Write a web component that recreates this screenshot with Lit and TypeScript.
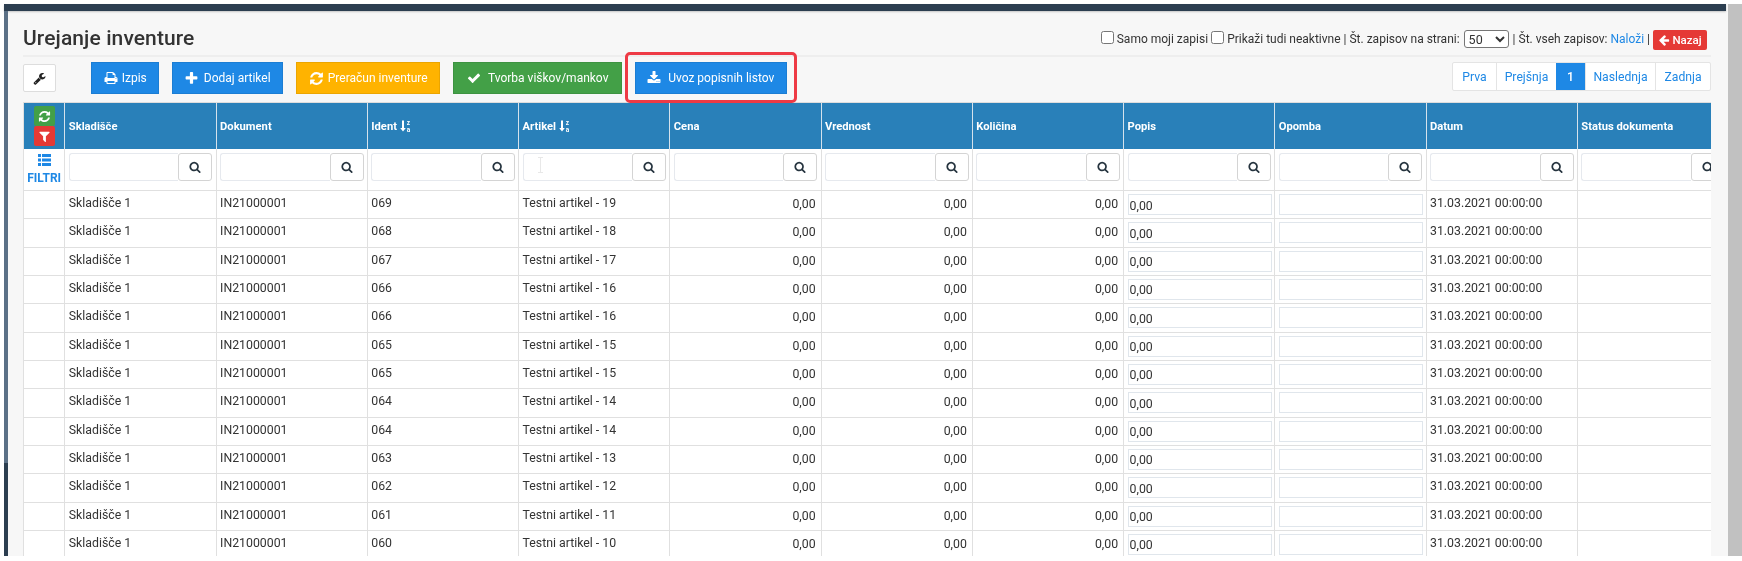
import { LitElement, html, css, svg } from 'lit';
import { customElement } from 'lit/decorators.js';

const P = {
  search: 'M1216 832q0-185-131.500-316.500t-316.500-131.500-316.500 131.500-131.500 316.500 131.500 316.500 316.500 131.500 316.500-131.500 131.500-316.500zm512 832q0 52-38 90t-90 38q-54 0-90-38l-343-342q-179 124-399 124-143 0-273.500-55.500t-225-150-150-225-55.500-273.500 55.500-273.500 150-225 225-150 273.500-55.500 273.500 55.500 225 150 150 225 55.500 273.500q0 220-124 399l343 343q37 37 37 90z',
  plus: 'M1600 736v192q0 40-28 68t-68 28h-416v416q0 40-28 68t-68 28h-192q-40 0-68-28t-28-68v-416h-416q-40 0-68-28t-28-68v-192q0-40 28-68t68-28h416v-416q0-40 28-68t68-28h192q40 0 68 28t28 68v416h416q40 0 68 28t28 68z',
  check: 'M1671 566q0 40-28 68l-724 724-136 136q-28 28-68 28t-68-28l-136-136-362-362q-28-28-28-68t28-68l136-136q28-28 68-28t68 28l294 295 656-657q28-28 68-28t68 28l136 136q28 28 28 68z',
  refresh: 'M1639 1056q0 5-1 7-64 268-268 434.500t-478 166.500q-146 0-282.500-55t-243.500-157l-129 129q-19 19-45 19t-45-19-19-45v-448q0-26 19-45t45-19h448q26 0 45 19t19 45-19 45l-137 137q71 66 161 102t187 36q134 0 250-65t186-179q11-17 53-117 8-23 30-23h192q13 0 22.500 9.500t9.500 22.500zm25-800v448q0 26-19 45t-45 19h-448q-26 0-45-19t-19-45 19-45l138-138q-148-137-349-137-134 0-250 65t-186 179q-11 17-53 117-8 23-30 23h-199q-13 0-22.500-9.500t-9.500-22.500v-7q65-268 270-434.500t480-166.500q146 0 284 55.500t245 156.500l130-129q19-19 45-19t45 19 19 45z',
  download: 'M1344 1344q0-26-19-45t-45-19-45 19-19 45 19 45 45 19 45-19 19-45zm256 0q0-26-19-45t-45-19-45 19-19 45 19 45 45 19 45-19 19-45zm128-224v320q0 40-28 68t-68 28h-1472q-40 0-68-28t-28-68v-320q0-40 28-68t68-28h465l135 136q58 56 136 56t136-56l136-136h464q40 0 68 28t28 68zm-325-569q17 41-14 70l-448 448q-18 19-45 19t-45-19l-448-448q-31-29-14-70 17-39 59-39h256v-448q0-26 19-45t45-19h256q26 0 45 19t19 45v448h256q42 0 59 39z',
  print: 'M448 1536h896v-256h-896v256zm0-640h896v-384h-160q-40 0-68-28t-28-68v-160h-640v640zm1152 64q0-26-19-45t-45-19-45 19-19 45 19 45 45 19 45-19 19-45zm128 0v416q0 13-9.500 22.500t-22.500 9.500h-224v160q0 40-28 68t-68 28h-960q-40 0-68-28t-28-68v-160h-224q-13 0-22.500-9.500t-9.500-22.500v-416q0-79 56.500-135.500t135.500-56.500h64v-544q0-40 28-68t68-28h672q40 0 88 20t76 48l152 152q28 28 48 76t20 88v256h64q79 0 135.500 56.500t56.500 135.500z',
  filter: 'M1595 295q17 41-14 70l-493 493v742q0 42-39 59-13 5-25 5-27 0-45-19l-256-256q-19-19-19-45v-486l-493-493q-31-29-14-70 17-39 59-39h1280q42 0 59 39z',
  wrench: 'M448 1472q0-26-19-45t-45-19-45 19-19 45 19 45 45 19 45-19 19-45zm644-420l-682 682q-37 37-90 37-52 0-91-37l-106-108q-38-36-38-90 0-53 38-91l681-681q39 98 114.500 173.500t173.500 114.500zm634-435q0 39-23 106-47 134-164.500 217.500t-258.500 83.500q-185 0-316.500-131.500t-131.500-316.500 131.500-316.500 316.500-131.500q58 0 121.500 16.500t107.500 46.500q16 11 16 28t-16 28l-293 169v224l193 107q5-3 79-48.500t135.500-81 70.500-35.500q15 0 23.500 10t8.500 25z',
  back: 'M1664 896v128q0 53-32.500 90.500t-84.500 37.500h-704l293 294q38 36 38 90t-38 90l-75 76q-37 37-90 37-52 0-91-37l-651-652q-37-37-37-90 0-52 37-91l651-650q38-38 91-38 52 0 90 38l75 74q38 38 38 91t-38 91l-293 293h704q52 0 84.500 37.500t32.500 90.500z',
};

const icon = (d: string, size = 14) => html`
  <svg class="ico" width=${size} height=${size} viewBox="0 0 1792 1792" fill="currentColor">
    ${svg`<path d=${d}></path>`}
  </svg>
`;

const sortIcon = html`
  <svg class="sort" width="12" height="12" viewBox="0 0 12 12" fill="currentColor">
    <path d="M2 0.500h2v7.500h1.800l-2.800 3.500-2.800-3.500h1.800z"></path>
    <text x="6.700" y="5.200" font-size="6.500" font-weight="700" font-family="Roboto">z</text>
    <text x="6.700" y="11.500" font-size="6.500" font-weight="700" font-family="Roboto">a</text>
  </svg>
`;

const COLS = [
  { name: 'Skladišče' },
  { name: 'Dokument' },
  { name: 'Ident', sort: true },
  { name: 'Artikel', sort: true },
  { name: 'Cena' },
  { name: 'Vrednost' },
  { name: 'Količina' },
  { name: 'Popis' },
  { name: 'Opomba' },
  { name: 'Datum' },
  { name: 'Status dokumenta' },
];

const ROWS: [string, number][] = [
  ['069', 19], ['068', 18], ['067', 17], ['066', 16], ['066', 16], ['065', 15], ['065', 15],
  ['064', 14], ['064', 14], ['063', 13], ['062', 12], ['061', 11], ['060', 10],
];

@customElement('app-root')
export class AppRoot extends LitElement {
  static styles = css`
    :host {
      display: block;
      width: 1742px;
      height: 561px;
      overflow: hidden;
      background: #fff;
      font-family: Roboto, sans-serif;
      font-size: 12.5px;
      color: #333;
    }

    .frame {
      display: flex;
      height: 552px;
      margin: 4px 0 5px 4px;
      filter: blur(0.4px);
    }

    .page {
      flex: 1;
      min-width: 0;
      display: flex;
      flex-direction: column;
      background: #f7f7f7;
    }

    .topbar {
      height: 7px;
      margin-right: 2px;
      background: #2c3e50;
      box-shadow: 0 1px 2px rgba(0, 0, 0, 0.2);
    }

    .body {
      flex: 1;
      min-height: 0;
      display: flex;
    }

    .strip {
      width: 4px;
      background: linear-gradient(#5b7086 452px, #2c3e50 452px);
    }

    .content {
      flex: 1;
      min-width: 0;
      padding: 0 17px 0 15px;
      display: flex;
      flex-direction: column;
    }

    .scrollbar {
      width: 14px;
      background: #c1c1c1;
    }

    .head {
      height: 32px;
      padding-top: 12px;
      flex: none;
      border-bottom: 2px solid #eee;
      display: flex;
      justify-content: space-between;
      align-items: center;
    }

    h1 {
      margin: 0 0 3px;
      font-size: 21px;
      font-weight: 500;
      color: #333;
      letter-spacing: 0.1px;
    }

    .opts {
      display: flex;
      align-items: center;
      white-space: nowrap;
      margin-right: 4px;
      font-size: 12px;
    }

    .opts input {
      width: 13px;
      height: 13px;
      margin: 0 3px 4px 3px;
    }

    .opts select {
      width: 45px;
      height: 18px;
      margin: 0 4px;
      font: 12.5px Roboto, sans-serif;
      background: #fff;
      color: #333;
      border-radius: 3px;
    }

    a {
      color: #1e88e5;
    }

    .nazaj {
      display: inline-flex;
      align-items: center;
      justify-content: center;
      gap: 2px;
      width: 54px;
      height: 20px;
      margin: 2px 0 0 3px;
      background: #e53935;
      color: #fff;
      border-radius: 2px;
      font-size: 11.5px;
      font-weight: 500;
    }

    .toolbar {
      flex: none;
      display: flex;
      align-items: center;
      gap: 13px;
      margin-top: 5px;
      height: 32px;
    }

    .wrench {
      width: 33px;
      height: 28px;
      box-sizing: border-box;
      margin-right: 21.7px;
      display: flex;
      align-items: center;
      justify-content: center;
      background: #fff;
      border: 1px solid #ddd;
      border-radius: 2px;
      color: #222;
    }

    .btn {
      height: 32px;
      box-sizing: border-box;
      display: flex;
      align-items: center;
      font-size: 12px;
      color: #fff;
      white-space: nowrap;
      border: 1px solid rgba(0, 0, 0, 0.08);
    }

    .izpis { width: 68.600px; padding-left: 12px; gap: 4px; }
    .dodaj { width: 111px; padding-left: 10.500px; gap: 5px; }
    .preracun { width: 143.700px; padding-left: 11.500px; gap: 4px; }
    .tvorba { width: 168.700px; padding-left: 13px; gap: 7px; }
    .uvoz { width: 152.300px; padding-left: 11.500px; gap: 7px; }

    .blue { background: #1e88e5; }
    .orange { background: #ffb300; }
    .green { background: #43a047; }

    .marked {
      position: relative;
    }

    .marked::after {
      content: '';
      position: absolute;
      inset: -11px -11px -10px -11px;
      border: 3.500px solid #ee3a45;
      border-radius: 5px;
    }

    .pager {
      margin-left: auto;
      align-self: flex-start;
      height: 29px;
      display: flex;
      background: #fff;
      border: 1px solid #e4e4e4;
      border-radius: 2px;
      box-sizing: border-box;
      color: #1e88e5;
      font-size: 12.2px;
    }

    .pager span {
      display: flex;
      align-items: center;
      justify-content: center;
      border-left: 1px solid #e4e4e4;
      box-sizing: border-box;
    }

    .pager span:first-child {
      border-left: 0;
    }

    .pager .on {
      background: #1e88e5;
      color: #fff;
      font-weight: 500;
      border-left: 0;
    }

    .prva { width: 43px; }
    .prejsnja { width: 60px; }
    .pager .on { width: 29px; }
    .naslednja { width: 70px; }
    .zadnja { width: 55px; }

    .tablewrap {
      flex: none;
      height: 454px;
      margin-top: 8px;
      overflow: hidden;
      border-top: 1px solid #ddd;
      border-left: 1px solid #e0e0e0;
      box-sizing: border-box;
    }

    .grid {
      display: grid;
      grid-template-columns: 41.3px repeat(11, 151.25px);
      grid-template-rows: 46px 42px;
      grid-auto-rows: 28.33px;
      width: max-content;
      background: #fff;
    }

    .cell {
      box-sizing: border-box;
      border-right: 1px solid #e0e0e0;
      border-bottom: 1px solid #e0e0e0;
      padding: 4px 4px 0 3.5px;
      line-height: 17px;
      font-size: 12.3px;
      white-space: nowrap;
      overflow: hidden;
    }

    .th {
      background: #2980b9;
      color: #fff;
      font-weight: 700;
      font-size: 11.2px;
      border-bottom: 0;
      display: flex;
      align-items: center;
      gap: 3px;
      padding: 0 4px 0 3.5px;
      border-right-color: #d5e2ec;
    }

    .corner {
      flex-direction: column;
      gap: 0;
      padding: 3px 0 0;
      justify-content: flex-start;
    }

    .mini {
      width: 21px;
      height: 20px;
      display: flex;
      align-items: center;
      justify-content: center;
      color: #fff;
      border-radius: 2px;
    }

    .mini.g { background: #43a047; }
    .mini.r { background: #e53935; }

    .filters {
      display: flex;
      flex-direction: column;
      align-items: center;
      color: #1e88e5;
      font-weight: 700;
      font-size: 12px;
      line-height: 14px;
      padding: 5px 0 0;
      gap: 5px;
    }

    .flt {
      padding: 4px 4px 0 3.5px;
      position: relative;
    }

    .search {
      display: flex;
      width: 143.5px;
      height: 28px;
    }

    .search input {
      flex: 1;
      min-width: 0;
      box-sizing: border-box;
      border: 1px solid #e6e9ee;
      border-right: 0;
      border-radius: 3px 0 0 3px;
      background: #fff;
    }

    .search button {
      width: 34px;
      box-sizing: border-box;
      padding: 0;
      display: flex;
      align-items: center;
      justify-content: center;
      background: #fff;
      color: #26343f;
      border: 1px solid #d4d4d4;
      border-radius: 3px;
    }

    .ibeam {
      position: absolute;
      left: 18px;
      top: 8px;
      width: 7px;
      height: 16px;
      color: #e8e8e8;
    }

    .num {
      text-align: right;
      padding: 5px 5px 0 0;
    }

    .edit {
      padding: 3px 3px 0 3.5px;
    }

    .edit input {
      display: block;
      width: 144px;
      height: 21px;
      box-sizing: border-box;
      border: 1px solid #e0e6ec;
      background: #fff;
      padding: 2px 1px 0;
      font: 12.3px Roboto, sans-serif;
      color: #333;
      outline: none;
    }

    .ico {
      display: block;
      flex: none;
    }

    .sort {
      flex: none;
    }
  `;

  renderRow(ident: string, n: number) {
    return html`
      <div class="cell"></div>
      <div class="cell">Skladišče 1</div>
      <div class="cell">IN21000001</div>
      <div class="cell">${ident}</div>
      <div class="cell">Testni artikel - ${n}</div>
      <div class="cell num">0,00</div>
      <div class="cell num">0,00</div>
      <div class="cell num">0,00</div>
      <div class="cell edit"><input value="0,00" /></div>
      <div class="cell edit"><input /></div>
      <div class="cell">31.03.2021 00:00:00</div>
      <div class="cell"></div>
    `;
  }

  render() {
    return html`
      <div class="frame">
        <div class="page">
          <div class="topbar"></div>
          <div class="body">
            <div class="strip"></div>
            <div class="content">
              <div class="head">
                <h1>Urejanje inventure</h1>
                <div class="opts">
                  <input type="checkbox" /><span>Samo moji zapisi</span>
                  <input type="checkbox" /><span>Prikaži tudi neaktivne | Št. zapisov na strani:</span>
                  <select><option>50</option></select>
                  <span>| Št. vseh zapisov: <a>Naloži</a> |</span>
                  <span class="nazaj">${icon(P.back, 12)}Nazaj</span>
                </div>
              </div>

              <div class="toolbar">
                <div class="wrench">${icon(P.wrench, 13)}</div>
                <div class="btn blue izpis">${icon(P.print)}Izpis</div>
                <div class="btn blue dodaj">${icon(P.plus, 15)}Dodaj artikel</div>
                <div class="btn orange preracun">${icon(P.refresh, 15)}Preračun inventure</div>
                <div class="btn green tvorba">${icon(P.check)}Tvorba viškov/mankov</div>
                <div class="btn blue uvoz marked">${icon(P.download)}Uvoz popisnih listov</div>
                <div class="pager">
                  <span class="prva">Prva</span>
                  <span class="prejsnja">Prejšnja</span>
                  <span class="on">1</span>
                  <span class="naslednja">Naslednja</span>
                  <span class="zadnja">Zadnja</span>
                </div>
              </div>

              <div class="tablewrap">
                <div class="grid">
                  <div class="cell th corner">
                    <div class="mini g">${icon(P.refresh, 13)}</div>
                    <div class="mini r">${icon(P.filter, 13)}</div>
                  </div>
                  ${COLS.map(
                    (c) => html`<div class="cell th">${c.name}${c.sort ? sortIcon : ''}</div>`,
                  )}

                  <div class="cell filters">
                    <svg width="13" height="12" viewBox="0 0 13 12" fill="currentColor">
                      <path d="M0 0h3v3H0zM4 0h9v3H4zM0 4.500h3v3H0zM4 4.500h9v3H4zM0 9h3v3H0zM4 9h9v3H4z"></path>
                    </svg>
                    FILTRI
                  </div>
                  ${COLS.map(
                    (c) => html`
                      <div class="cell flt">
                        <div class="search">
                          <input />
                          <button>${icon(P.search, 12)}</button>
                        </div>
                        ${c.name === 'Artikel'
                          ? html`<svg class="ibeam" viewBox="0 0 7 16" fill="none" stroke="currentColor">
                              <path d="M1 .5h5M3.500.5v15M1 15.500h5"></path>
                            </svg>`
                          : ''}
                      </div>
                    `,
                  )}

                  ${ROWS.map(([id, n]) => this.renderRow(id, n))}
                </div>
              </div>
            </div>
          </div>
        </div>
        <div class="scrollbar"></div>
      </div>
    `;
  }
}
